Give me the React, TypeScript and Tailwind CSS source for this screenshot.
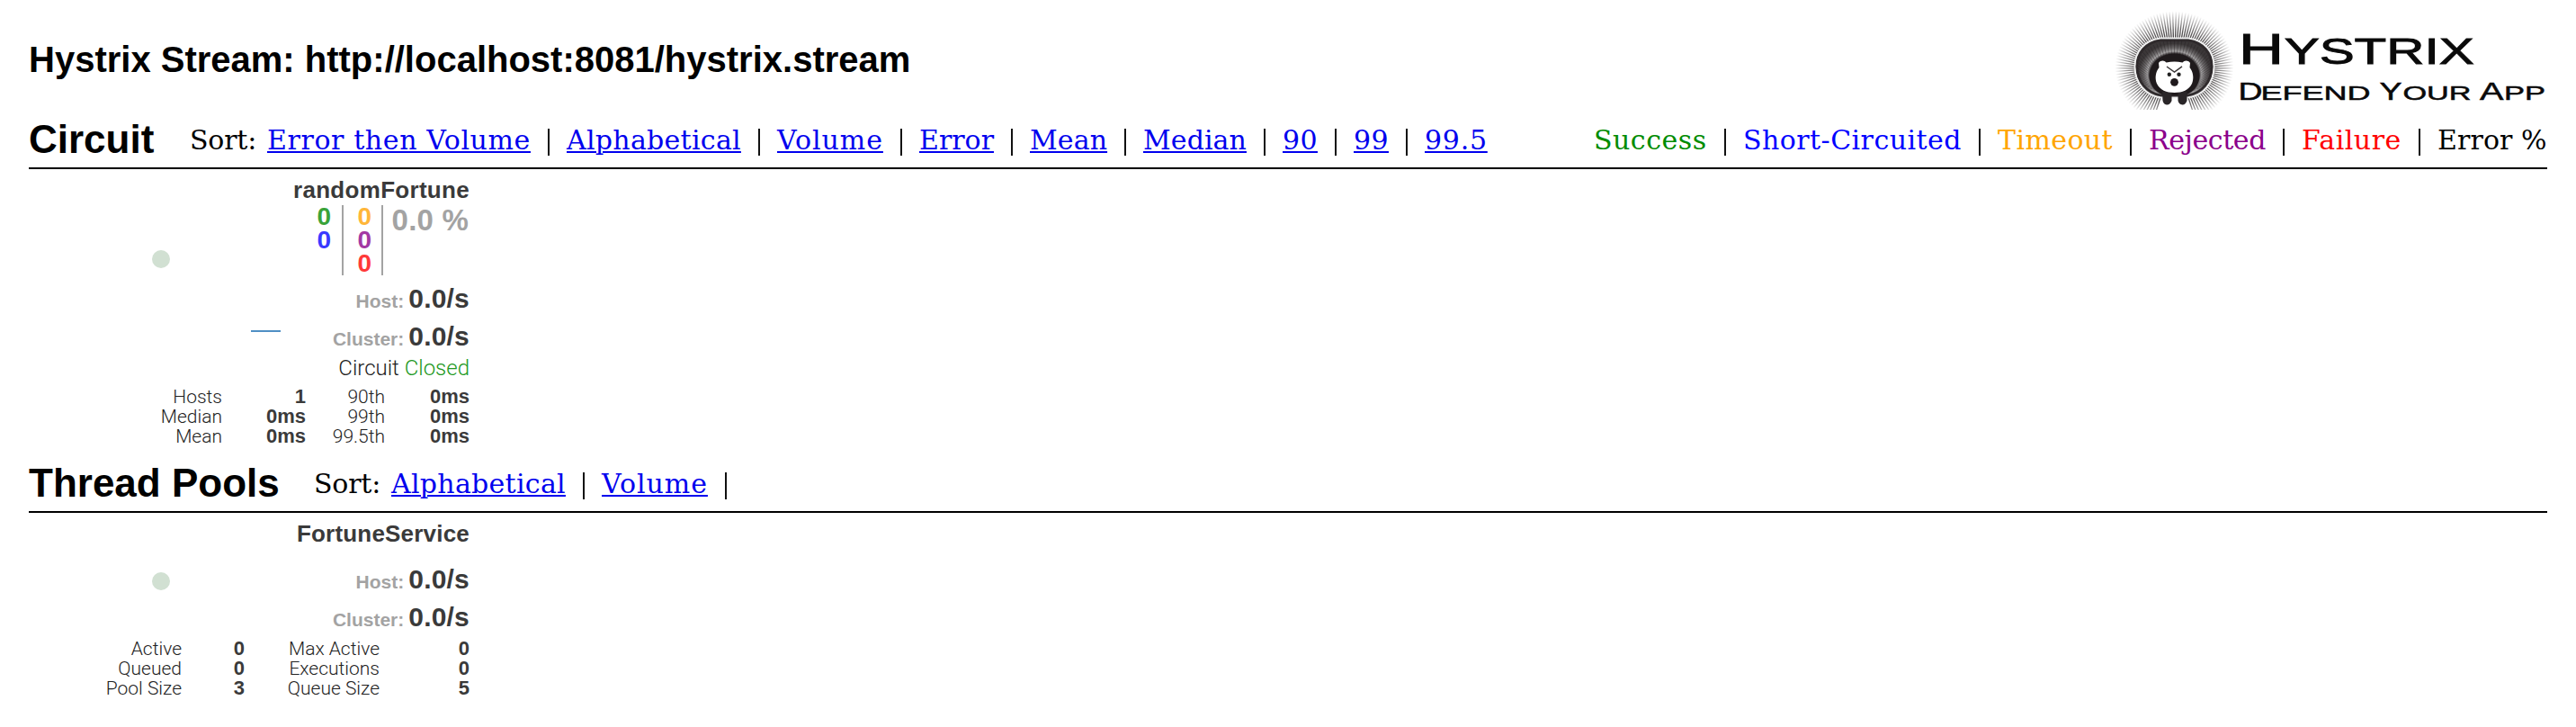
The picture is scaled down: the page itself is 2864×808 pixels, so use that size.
import type { ReactNode } from "react";

const Bar = () => (
  <span className="flex h-12 w-10 shrink-0 items-center justify-center">
    <span className="mt-[3px] h-[30px] w-[2px] bg-[#111]" />
  </span>
);

type Item = { label: string; cls: string };

const circuitSorts: Item[] = [
  { label: "Error then Volume", cls: "w-[293px] tracking-[0.61px]" },
  { label: "Alphabetical", cls: "w-[194px] tracking-[0.28px]" },
  { label: "Volume", cls: "w-[118px] tracking-[0.97px]" },
  { label: "Error", cls: "w-[83px] tracking-[0px]" },
  { label: "Mean", cls: "w-[86px] tracking-[0.1px]" },
  { label: "Median", cls: "w-[115px] tracking-[0.08px]" },
  { label: "90", cls: "w-[39px] tracking-[0.4px]" },
  { label: "99", cls: "w-[39px] tracking-[0.4px]" },
  { label: "99.5", cls: "w-[70px] tracking-[0.75px]" },
];

const poolSorts: Item[] = circuitSorts.slice(1, 3);

const legend: Item[] = [
  { label: "Success", cls: "w-[126px] tracking-[0.5px] text-[#008c00]" },
  { label: "Short-Circuited", cls: "w-[243px] tracking-[0.45px] text-[#0000ff]" },
  { label: "Timeout", cls: "w-[128px] tracking-[0.4px] text-[#ffa500]" },
  { label: "Rejected", cls: "w-[130px] -tracking-[0.4px] text-[#8b008b]" },
  { label: "Failure", cls: "w-[111px] tracking-[0.5px] text-[#ff0000]" },
  { label: "Error %", cls: "w-[122px] tracking-[0.1px] text-black" },
];

const serif = "mt-px font-['DejaVu_Serif',serif] text-[30px] leading-[48px] whitespace-nowrap";

function SortLinks({ items, trailing }: { items: Item[]; trailing?: boolean }) {
  return (
    <nav className={`flex ${serif}`}>
      <span className="w-[86px] -tracking-[0.2px]">Sort:</span>
      {items.map((s, i) => (
        <span key={s.label} className="flex">
          {i > 0 && <Bar />}
          <a className={`h-12 text-[#0000ee] underline decoration-2 underline-offset-[2px] ${s.cls}`}>{s.label}</a>
        </span>
      ))}
      {trailing && <Bar />}
    </nav>
  );
}

function SectionHeader({ title, titleCls, children }: { title: string; titleCls: string; children: ReactNode }) {
  return (
    <div className="mx-8 flex h-[57px] items-start border-b-2 border-black">
      <h2 className={`shrink-0 text-[44px] leading-[48px] font-bold whitespace-nowrap ${titleCls}`}>{title}</h2>
      {children}
    </div>
  );
}

function Rate({ label }: { label: string }) {
  return (
    <div className="flex h-[42px] items-baseline justify-end leading-[42px] font-bold">
      <span className="mr-[5px] text-[21px] text-[#a3a3a3]">{label}</span>
      <span className="text-[30px] tracking-[0.2px]">0.0/s</span>
    </div>
  );
}

function Stats({ rows, cols }: { rows: string[][]; cols: string }) {
  return (
    <div className={`grid text-right text-[21px] leading-[22px] ${cols}`}>
      {rows.flatMap((row, r) =>
        row.map((cell, c) => (
          <span
            key={`${r}-${c}`}
            className={
              c % 2
                ? "h-[22px] text-[22px] font-bold"
                : "h-[22px] font-[Roboto,sans-serif] font-light whitespace-nowrap text-[#222]"
            }
          >
            {cell}
          </span>
        )),
      )}
    </div>
  );
}

const polar = (n: number, phase = 0) => Array.from({ length: n }, (_, i) => ((i + phase) / n) * Math.PI * 2);

/* Outer quills radiate from the body outline, leaving a gap for the feet. */
const quills = polar(112, 0.5)
  .map((a) => {
    const c = Math.cos(a);
    const s = Math.sin(a);
    return { x1: 69 + c * 40, y1: 75 + s * 32, x2: 69 + c * 66, y2: 74 + s * 63 };
  })
  .filter((q) => !(q.y1 > 98 && Math.abs(q.x1 - 69) < 14));

const innerQuills = polar(64).map((a) => ({
  x1: 69 + Math.cos(a) * 30,
  y1: 83 + Math.sin(a) * 22,
  x2: 69 + Math.cos(a) * 42,
  y2: 75 + Math.sin(a) * 30,
}));

function Logo() {
  return (
    <svg width="484" height="124" viewBox="0 0 484 124" role="img" aria-label="Hystrix" className="shrink-0">
      <defs>
        <radialGradient id="quill" gradientUnits="userSpaceOnUse" cx="0" cy="0" r="66" gradientTransform="translate(69 75) scale(1 .95)">
          <stop offset="0.5" stopColor="#3a3637" />
          <stop offset="0.68" stopColor="#3a3637" stopOpacity="0.8" />
          <stop offset="0.85" stopColor="#3a3637" stopOpacity="0.4" />
          <stop offset="1" stopColor="#3a3637" stopOpacity="0" />
        </radialGradient>
        <radialGradient id="body" gradientUnits="userSpaceOnUse" cx="0" cy="0" r="42" gradientTransform="translate(69 83) scale(1 .86)">
          <stop offset="0.64" stopColor="#1f1a1c" />
          <stop offset="0.72" stopColor="#a5a3a4" />
          <stop offset="0.82" stopColor="#6b6869" />
          <stop offset="0.96" stopColor="#3b3738" />
        </radialGradient>
        <clipPath id="frame">
          <rect x="0" y="12" width="140" height="110" />
        </clipPath>
      </defs>
      <g transform="translate(0.5 0)">
        <g clipPath="url(#frame)" stroke="url(#quill)" strokeWidth="1.3">
          {quills.map((q, i) => (
            <line key={i} x1={q.x1} y1={q.y1} x2={q.x2} y2={q.y2} />
          ))}
        </g>
        <path
          d="M53 42.5 H85 C103 45 113 58 113 74 C113 92 101 106 84 108.5 H54 C37 106 25 92 25 74 C25 58 35 45 53 42.5 Z"
          fill="url(#body)"
          stroke="#efefef"
          strokeWidth="2"
        />
        <path
          d="M54 45 H84 C100 47 110.5 59 110.5 74 C110.5 90 100 103.5 84 106 H54 C38 103.5 27.5 90 27.5 74 C27.5 59 38 47 54 45 Z"
          fill="none"
          stroke="#2f2a2c"
          strokeWidth="2.5"
        />
        <g stroke="#1f1a1c" strokeOpacity="0.4" strokeWidth="0.9">
          {innerQuills.map((q, i) => (
            <line key={i} x1={q.x1} y1={q.y1} x2={q.x2} y2={q.y2} />
          ))}
        </g>
        <path d="M57 63.5 H81 C91 67 97 76 97 84 C97 95 89 104 79 106 H59 C49 104 41 95 41 84 C41 76 47 67 57 63.5 Z" fill="#1f1a1c" />
        <path
          d="M55.5 102 H66 V112 Q64 116.5 60.5 116.5 Q57 116 56 112 Z M73 102 H83 V112 Q81 116.5 78 116.5 Q74 116 73 112 Z"
          fill="#2a2628"
        />
        <path
          d="M51.5 70 C54 66.5 58 67 60 69.5 Q69 67.5 78 69.5 C80 67 84 66.5 86.5 70 L86 75 C90 80 91 87 88.5 93 C85 100 78 103 69 103 C60 103 53 100 49.5 93 C47 87 48 80 52 75 Z"
          fill="#fff"
        />
        <path d="M60.5 74 L69 80 L77.5 73.8" fill="none" stroke="#3a3637" strokeWidth="1.5" />
        <circle cx="63.3" cy="82.7" r="2.2" fill="#222" />
        <circle cx="74" cy="82.7" r="2.2" fill="#222" />
        <circle cx="69" cy="91.3" r="4.4" fill="#1f1a1c" />
      </g>
      <g fontFamily="'Liberation Sans', sans-serif" fill="#0a0a0a" stroke="#0a0a0a" strokeWidth="0.9">
        <text x="141" y="71" fontSize="48" textLength="50" lengthAdjust="spacingAndGlyphs">H</text>
        <text x="191.7" y="71" fontSize="40" textLength="211" lengthAdjust="spacingAndGlyphs">YSTRIX</text>
        <g strokeWidth="0.5">
          <text x="140.5" y="111" fontSize="27" textLength="27" lengthAdjust="spacingAndGlyphs">D</text>
          <text x="165.5" y="111" fontSize="22.5" textLength="122" lengthAdjust="spacingAndGlyphs">EFEND</text>
          <text x="297.5" y="111" fontSize="27" textLength="25" lengthAdjust="spacingAndGlyphs">Y</text>
          <text x="323.5" y="111" fontSize="22.5" textLength="76" lengthAdjust="spacingAndGlyphs">OUR</text>
          <text x="409" y="111" fontSize="27" textLength="26.5" lengthAdjust="spacingAndGlyphs">A</text>
          <text x="436" y="111" fontSize="22.5" textLength="46" lengthAdjust="spacingAndGlyphs">PP</text>
        </g>
      </g>
    </svg>
  );
}

export default function App() {
  return (
    <div className="h-[808px] w-full overflow-hidden bg-white font-['Liberation_Sans',Arial,sans-serif] text-black">
      <header className="flex h-[131px] justify-between px-8">
        <h1 className="pt-[42px] text-[40px] leading-[48px] font-bold whitespace-nowrap">
          Hystrix Stream: http://localhost:8081/hystrix.stream
        </h1>
        <Logo />
      </header>

      <SectionHeader title="Circuit" titleCls="w-[179px]">
        <div className="flex flex-1 justify-between">
          <SortLinks items={circuitSorts} />
          <div className={`flex ${serif}`}>
            {legend.map((l, i) => (
              <span key={l.label} className="flex">
                {i > 0 && <Bar />}
                <span className={l.cls}>{l.label}</span>
              </span>
            ))}
          </div>
        </div>
      </SectionHeader>

      <section className="ml-8 h-[325px] w-[490px] pt-2 text-[#3a3a3a]">
        <h3 className="text-right text-[26px] leading-[30px] font-bold tracking-[0.3px]">randomFortune</h3>
        <div className="flex h-[204px]">
          <svg width="280" height="203" className="shrink-0">
            <circle cx="147" cy="62" r="10" fill="#d1e0d2" />
            <line x1="247" y1="142" x2="280" y2="142" stroke="#4f8fc4" strokeWidth="2" />
          </svg>
          <div className="flex-1 pt-[2px]">
            <div className="flex h-[78px] justify-end text-right text-[28px] leading-[26px] font-bold">
              <div className="w-[60px] border-r-2 border-[#a3a3a3] pr-3">
                <div className="text-[#39a339]">0</div>
                <div className="text-[#3939ff]">0</div>
              </div>
              <div className="w-[44px] border-r-2 border-[#a3a3a3] pr-[11px]">
                <div className="text-[#ffb639]">0</div>
                <div className="text-[#a339a3]">0</div>
                <div className="text-[#ff3939]">0</div>
              </div>
              <div className="w-[96px] pr-px text-[33px] leading-[34px] tracking-[0.2px] whitespace-nowrap text-[#a3a3a3]">
                0.0 %
              </div>
            </div>
            <div className="pt-[5px]">
              <Rate label="Host:" />
              <Rate label="Cluster:" />
            </div>
            <div className="text-right font-[Roboto,sans-serif] text-[24px] leading-[28px] font-light text-[#222]">
              Circuit <span className="text-[#229922]">Closed</span>
            </div>
          </div>
        </div>
        <Stats
          cols="grid-cols-[215px_93px_88px_94px]"
          rows={[
            ["Hosts", "1", "90th", "0ms"],
            ["Median", "0ms", "99th", "0ms"],
            ["Mean", "0ms", "99.5th", "0ms"],
          ]}
        />
      </section>

      <SectionHeader title="Thread Pools" titleCls="w-[317px]">
        <SortLinks items={poolSorts} trailing />
      </SectionHeader>

      <section className="ml-8 w-[490px] pt-2 text-[#3a3a3a]">
        <h3 className="text-right text-[26px] leading-[30px] font-bold tracking-[0.2px]">FortuneService</h3>
        <div className="flex h-[102px]">
          <svg width="280" height="101" className="shrink-0">
            <circle cx="147" cy="38" r="10" fill="#d1e0d2" />
          </svg>
          <div className="flex-1 pt-[15px]">
            <Rate label="Host:" />
            <Rate label="Cluster:" />
          </div>
        </div>
        <Stats
          cols="grid-cols-[170px_70px_150px_100px]"
          rows={[
            ["Active", "0", "Max Active", "0"],
            ["Queued", "0", "Executions", "0"],
            ["Pool Size", "3", "Queue Size", "5"],
          ]}
        />
      </section>
    </div>
  );
}
